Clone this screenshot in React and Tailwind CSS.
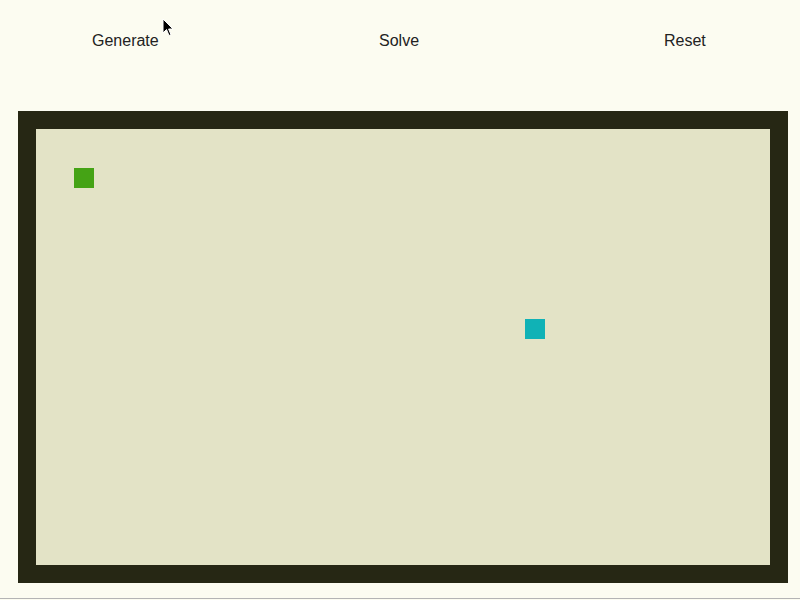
export default function App() {
  return (
    <div className="relative w-[800px] h-[600px] overflow-hidden bg-[#fcfcf1]" style={{ fontFamily: '"Liberation Sans", Arial, sans-serif' }}>
      <div className="flex pt-[32px] pl-[92px] text-[16px] leading-[18px] text-[#222222]">
        <button className="w-[287px] text-left">Generate</button>
        <button className="w-[285px] text-left">Solve</button>
        <button className="text-left">Reset</button>
      </div>
      <div className="mt-[61px] ml-[18px] w-[770px] h-[472px] border-[18px] border-[#262714] bg-[#e3e3c6]">
        <div className="relative w-full h-full">
          <div className="absolute left-[38px] top-[39px] w-[20px] h-[20px] bg-[#45a315]" />
          <div className="absolute left-[489px] top-[190px] w-[20px] h-[20px] bg-[#10b2b6]" />
        </div>
      </div>
      <div className="mt-[15px] h-px bg-[#b4b4b4]" />
      <svg className="absolute left-[162px] top-[18px]" width="12" height="19" viewBox="0 0 12 19">
        <path d="M1 1 L1 15 L4.5 11.5 L7 17.5 L9 16.7 L6.6 11 L11 11 Z" fill="#000" stroke="#fff" strokeWidth="1" />
      </svg>
    </div>
  );
}
